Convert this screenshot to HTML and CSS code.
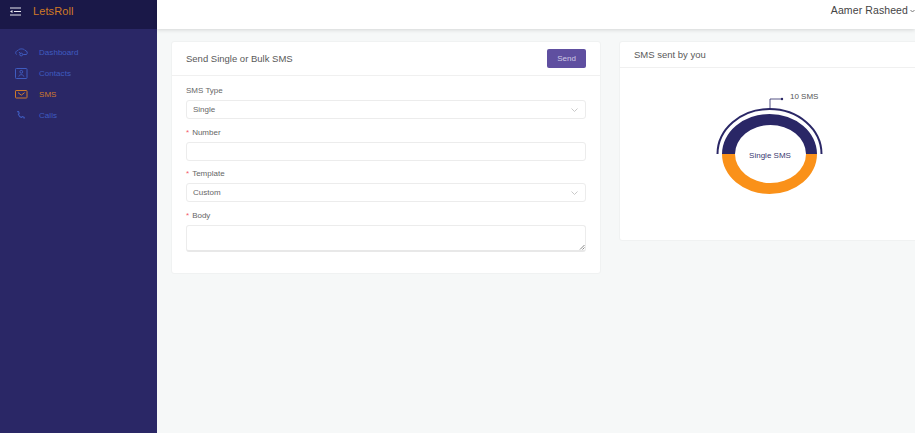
FILE: index.html
```html
<!DOCTYPE html>
<html lang="en">
<head>
<meta charset="utf-8">
<title>LetsRoll</title>
<link rel="stylesheet" href="styles.css">
</head>
<body>
<div class="app">
  <aside class="sidebar">
    <div class="brand">
      <svg class="menu-icon" width="11" height="9" viewBox="0 0 11 9"><path d="M0 1h11M4 4.500h7M0 8h11" stroke="#e8e8f0" stroke-width="1.100" fill="none"/><path d="M0 4.500l2.500-1.600v3.200z" fill="#e8e8f0"/></svg>
      <span class="brand-name">LetsRoll</span>
    </div>
    <nav class="nav">
      <a class="nav-item">
        <svg class="nav-icon" width="13" height="9" viewBox="0 0 13 9"><path d="M1.500 6.500C0 5 .8 2.800 3 2.400 4.200.4 8.800.4 10 2.400c2.200.4 3 2.600 1.500 4.100H8.200M4.800 6.500a1.400 1.400 0 1 0 2.800 0 1.400 1.400 0 1 0-2.800 0M5.300 5.500 4 4" stroke="currentColor" fill="none"/></svg>
        <span>Dashboard</span>
      </a>
      <a class="nav-item">
        <svg class="nav-icon" width="13" height="11" viewBox="0 0 13 11"><rect x=".5" y=".5" width="11.500" height="10" rx=".8" stroke="currentColor" fill="none"/><circle cx="6.300" cy="3.800" r="1.400" stroke="currentColor" fill="none"/><path d="M3.800 8.500c.4-2.400 4.600-2.400 5 0" stroke="currentColor" fill="none"/></svg>
        <span>Contacts</span>
      </a>
      <a class="nav-item active">
        <svg class="nav-icon" width="13" height="9" viewBox="0 0 13 9"><rect x=".5" y=".5" width="11.500" height="7.500" rx=".6" stroke="currentColor" fill="none"/><path d="M3 2.600l3.300 2.600 3.300-2.600" stroke="currentColor" fill="none"/></svg>
        <span>SMS</span>
      </a>
      <a class="nav-item">
        <svg class="nav-icon" width="13" height="9" viewBox="0 0 13 9"><path d="M2 .8 3.600.6l.6 1.800-.8 1c.5 1.500 1.500 2.500 3 3l1-.8 1.800.8-.2 1.300" stroke="currentColor" stroke-width="1.100" fill="none"/></svg>
        <span>Calls</span>
      </a>
    </nav>
  </aside>
  <div class="main">
    <header class="topbar">
      <span class="user">Aamer Rasheed</span>
      <svg class="user-caret" width="5" height="4" viewBox="0 0 5 4"><path d="M.5 1l2 2 2-2" stroke="#777" fill="none"/></svg>
    </header>
    <div class="content">
      <section class="card card-form">
        <div class="card-head">
          <h2 class="card-title">Send Single or Bulk SMS</h2>
          <button class="send" type="button">Send</button>
        </div>
        <form class="form">
          <div class="field">
            <label class="label">SMS Type</label>
            <div class="control select"><span>Single</span><svg width="7" height="4" viewBox="0 0 7 4"><path d="M.5.5 3.500 3.500 6.500.5" stroke="#c9c9c9" fill="none"/></svg></div>
          </div>
          <div class="field">
            <label class="label"><i class="req">*</i>Number</label>
            <div class="control"></div>
          </div>
          <div class="field">
            <label class="label"><i class="req">*</i>Template</label>
            <div class="control select"><span>Custom</span><svg width="7" height="4" viewBox="0 0 7 4"><path d="M.5.5 3.500 3.500 6.500.5" stroke="#c9c9c9" fill="none"/></svg></div>
          </div>
          <div class="field">
            <label class="label"><i class="req">*</i>Body</label>
            <div class="control area"><svg class="grip" width="6" height="6" viewBox="0 0 6 6"><path d="M5.500 1 1 5.500M5.500 3.500 3.500 5.500" stroke="#888" fill="none"/></svg></div>
          </div>
        </form>
      </section>
      <section class="card card-chart">
        <div class="card-head chart-head">
          <h2 class="card-title">SMS sent by you</h2>
        </div>
        <div class="chart-body">
          <svg class="donut" width="150" height="130" viewBox="0 0 150 130">
            <path d="M27 59A47.500 40 0 0 1 122 59H111A35.500 29 0 0 0 40 59Z" fill="#2a2766"/>
            <path d="M27 59A47.500 40 0 0 0 122 59H111A35.500 29 0 0 1 40 59Z" fill="#fa9119"/>
            <path d="M22.500 59A52 45 0 0 1 126.500 59" fill="none" stroke="#2a2766" stroke-width="2"/>
            <path d="M75 14V4H87" fill="none" stroke="#2a2766" stroke-width=".8"/>
            <circle cx="87" cy="4" r="1.200" fill="#2a2766"/>
            <text x="95" y="2" class="chart-value">10 SMS</text>
            <text x="75" y="63" text-anchor="middle" class="chart-center">Single SMS</text>
          </svg>
        </div>
      </section>
    </div>
  </div>
</div>
</body>
</html>
```
FILE: styles.css
```css
* { box-sizing: border-box; }
html, body { margin: 0; height: 100%; overflow: hidden; }
body { font-family: "Liberation Sans", Arial, sans-serif; color: #555; background: #f6f8f8; }
.app { display: flex; height: 433px; width: 915px; overflow: hidden; }
.sidebar { width: 157px; flex: none; background: #2a2766; }
.brand { height: 29px; background: #1a1848; display: flex; align-items: flex-start; padding: 6px 0 0 10px; gap: 12px; }
.menu-icon { margin-top: 1px; }
.brand-name { color: #d07a26; font-size: 11px; line-height: 11px; letter-spacing: .1px; }
.nav { padding-top: 12.500px; display: flex; flex-direction: column; }
.nav-item { height: 21px; display: flex; align-items: center; color: #3f5cc0; font-size: 8px; letter-spacing: .05px; padding-left: 15px; }
.nav-item span { margin-left: 11px; }
.nav-icon { flex: none; width: 13px; }
.nav-item.active { color: #cf7a2c; }
.main { flex: 1; min-width: 0; display: flex; flex-direction: column; }
.topbar { height: 29px; flex: none; background: #fff; box-shadow: 0 1px 4px rgba(0,0,0,.14); display: flex; align-items: flex-start; justify-content: flex-end; padding: 4px 0 0 0; gap: 2px; position: relative; }
.user { font-size: 10.500px; line-height: 13px; color: #444; letter-spacing: .1px; }
.user-caret { margin-top: 5px; }
.content { display: flex; align-items: flex-start; gap: 18px; padding: 12px 0 0 14px; }
.card { background: #fff; border: 1px solid #f0f2f2; border-radius: 3px; flex: none; }
.card-form { width: 430px; height: 233px; }
.card-chart { width: 310px; height: 200px; }
.card-head { height: 34px; border-bottom: 1px solid #f0f0f0; display: flex; align-items: center; justify-content: space-between; padding: 0 14px; }
.chart-head { height: 26px; }
.card-title { margin: 0; font-size: 9.500px; font-weight: 400; color: #595959; }
.send { width: 39px; height: 19px; border: 0; border-radius: 2px; background: #5f4fa0; color: #cfcae6; font: 8px "Liberation Sans", Arial, sans-serif; padding: 0; }
.form { padding: 10px 14px 0; display: flex; flex-direction: column; gap: 8.500px; }
.field { display: flex; flex-direction: column; }
.label { font-size: 8px; line-height: 10px; color: #666; margin-bottom: 4px; }
.req { color: #f5596b; font-style: normal; margin-right: 3px; }
.control { height: 19px; border: 1px solid #ececec; border-radius: 3px; background: #fff; display: flex; align-items: center; justify-content: space-between; padding: 0 6px; font-size: 8px; color: #666; }
.select svg { margin-right: 1px; }
.area { height: 27px; border-bottom: 2px solid #e8e8e8; position: relative; }
.grip { position: absolute; right: 0; bottom: 0; }
.chart-body { padding: 27px 0 0 75px; }
.donut { display: block; overflow: visible; }
.chart-value { font-size: 8px; fill: #555; dominant-baseline: middle; }
.chart-center { font-size: 8px; fill: #3a3870; }
```
